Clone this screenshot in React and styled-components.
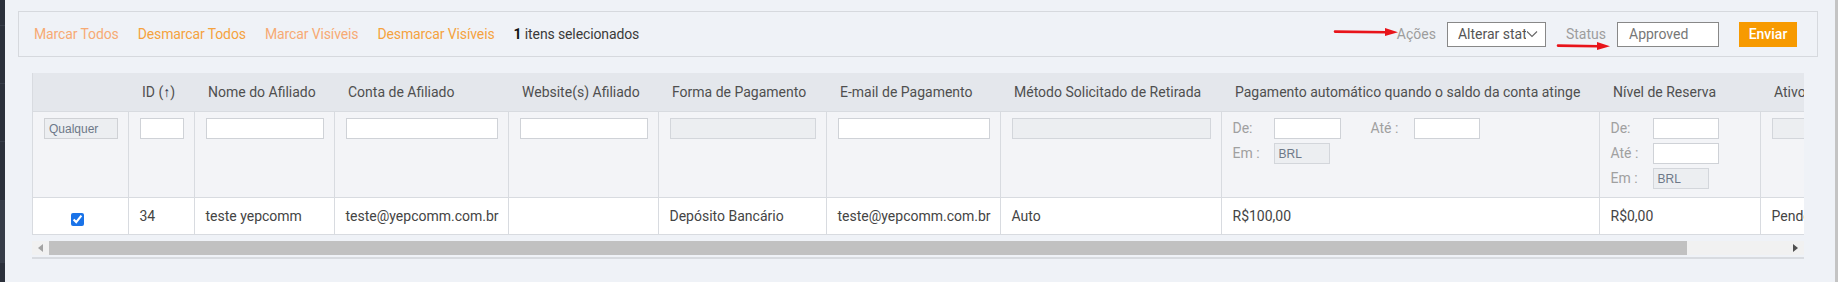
import React from "react";
import styled, { createGlobalStyle } from "styled-components";

const GlobalStyle = createGlobalStyle`
  html, body {
    margin: 0;
    padding: 0;
    background: #eff2f7;
  }
  body {
    font-family: Roboto, "Liberation Sans", Arial, sans-serif;
    font-size: 14px;
    color: #333;
  }
`;

const Page = styled.div`
  display: flex;
  height: 282px;
  overflow: hidden;
`;

const Sidebar = styled.aside`
  flex: none;
  width: 5px;
  display: flex;
  flex-direction: column;
  background: #2b303b;
`;

const SideBlock = styled.div`
  height: ${p => p.h}px;
  flex: none;
  background: ${p => (p.active ? "#363c48" : "#2b303b")};
  border-bottom: 1px solid #373d49;
`;

const WindowEdge = styled.div`
  flex: none;
  width: 3px;
  background: #c4c4c4;
`;

const Main = styled.main`
  flex: 1;
  min-width: 0;
  padding: 11px 17px 0 13px;
  position: relative;
`;

/* ---------- toolbar ---------- */

const Toolbar = styled.div`
  height: 46px;
  box-sizing: border-box;
  border: 1px solid #d6d9de;
  display: flex;
  align-items: center;
  padding: 0 20px 0 15px;
`;

const LinkGroup = styled.div`
  display: flex;
  align-items: center;
  gap: 19px;
  flex: 1;
  letter-spacing: -0.12px;
`;

const ToolLink = styled.a`
  color: ${p => (p.soft ? "#f7aa74" : "#f5a23e")};
  text-decoration: none;
  cursor: pointer;
`;

const Counter = styled.span`
  color: #3a3a3a;
  b {
    color: #111;
    font-weight: 700;
  }
`;

const ActionGroup = styled.div`
  display: flex;
  align-items: center;
`;

const FieldLabel = styled.span`
  color: #9d9d9d;
  margin-right: 11px;
`;

const FakeSelect = styled.div`
  width: 99px;
  height: 25px;
  box-sizing: border-box;
  border: 1px solid #888;
  background: #fff;
  display: flex;
  align-items: center;
  padding-left: 10px;
  color: #555;
  margin-right: 20px;
  overflow: hidden;
  span {
    width: 68px;
    overflow: hidden;
    white-space: nowrap;
  }
  svg {
    flex: none;
  }
`;

const StatusInput = styled.div`
  width: 102px;
  height: 25px;
  box-sizing: border-box;
  border: 1px solid #888;
  background: #fff;
  display: flex;
  align-items: center;
  padding-left: 11px;
  color: #777;
  margin-right: 20px;
`;

const SendButton = styled.button`
  width: 58px;
  height: 25px;
  border: none;
  background: #f79a00;
  color: #fff;
  font-family: inherit;
  font-size: 14px;
  font-weight: 500;
  padding: 0;
  cursor: pointer;
`;

const RedArrow = styled.svg`
  position: absolute;
  left: ${p => p.x}px;
  top: ${p => p.y}px;
  overflow: visible;
`;

/* ---------- table ---------- */

const TableArea = styled.section`
  margin: 16px 14px 0;
`;

const TableClip = styled.div`
  overflow: hidden;
  border-left: 1px solid #d8dbe0;
`;

const Grid = styled.table`
  border-collapse: collapse;
  table-layout: fixed;
  width: ${p => p.w}px;
`;

const HeadCell = styled.th`
  height: 38px;
  padding: 0 0 0 14px;
  background: #e4e7ec;
  color: #4f4f4f;
  font-weight: 400;
  text-align: left;
  white-space: nowrap;
  overflow: hidden;
  border-bottom: 1px solid #d8dbe0;
`;

const SortArrow = styled.span`
  color: #1e2b48;
  font-weight: 700;
`;

const FilterCell = styled.td`
  height: 86px;
  box-sizing: border-box;
  padding: 6px 10px 0 11px;
  vertical-align: top;
  background: #f3f4f7;
  border-right: 1px solid #d8dbe0;
  border-bottom: 1px solid #d8dbe0;
  overflow: hidden;
`;

const FilterInput = styled.div`
  width: ${p => (p.w ? `${p.w}px` : "100%")};
  height: 21px;
  box-sizing: border-box;
  border: 1px solid ${p => (p.disabled ? "#d3d6db" : "#cfd2d7")};
  background: ${p => (p.disabled ? "#eceef1" : "#fff")};
  font-family: "Liberation Sans", Arial, sans-serif;
  font-size: 12px;
  color: #6d7888;
  padding: 3px 0 0 4px;
`;

const AnyBox = styled(FilterInput)`
  background: #eceef1;
  border-color: #cfd1d5;
`;

const RangeGrid = styled.div`
  display: grid;
  grid-template-columns: ${p => p.cols};
  row-gap: 4px;
  align-items: center;
`;

const RangeLabel = styled.span`
  color: #a0a0a0;
  line-height: 21px;
`;

const DataCell = styled.td`
  height: 37px;
  box-sizing: border-box;
  padding: ${p => (p.center ? "4px 5px 0 0" : "0 0 0 11px")};
  background: #fff;
  color: #444;
  white-space: nowrap;
  overflow: hidden;
  border-right: 1px solid #d8dbe0;
  border-bottom: 1px solid #d8dbe0;
  text-align: ${p => (p.center ? "center" : "left")};
  input {
    margin: 0;
    width: 13px;
    height: 13px;
    accent-color: #1a73e8;
    vertical-align: middle;
  }
`;

const ScrollBar = styled.div`
  margin-top: 6px;
  height: 14px;
  display: flex;
  background: #f1f1f1;
`;

const ScrollButton = styled.div`
  flex: none;
  width: 17px;
  display: flex;
  align-items: center;
  justify-content: center;
`;

const ScrollThumb = styled.div`
  flex: none;
  width: ${p => p.w}px;
  background: #c1c1c1;
`;

const ScrollRest = styled.div`
  flex: 1;
`;

const BottomRule = styled.div`
  height: 2px;
  margin-top: 2px;
  background: #d8dbe0;
`;

const columns = [
  { w: 95, title: "" },
  { w: 66, title: "ID" },
  { w: 140, title: "Nome do Afiliado" },
  { w: 174, title: "Conta de Afiliado" },
  { w: 150, title: "Website(s) Afiliado" },
  { w: 168, title: "Forma de Pagamento" },
  { w: 174, title: "E-mail de Pagamento" },
  { w: 221, title: "Método Solicitado de Retirada" },
  { w: 378, title: "Pagamento automático quando o saldo da conta atinge" },
  { w: 161, title: "Nível de Reserva" },
  { w: 140, title: "Ativo" },
];

const row = [
  "34",
  "teste yepcomm",
  "teste@yepcomm.com.br",
  "",
  "Depósito Bancário",
  "teste@yepcomm.com.br",
  "Auto",
  "R$100,00",
  "R$0,00",
  "Pendente",
];

const Arrow = ({ x, y, w }) => (
  <RedArrow x={x} y={y} width={w} height={10} viewBox={`0 0 ${w} 10`}>
    <path d={`M0 4.6 L${w - 12} 5.2`} stroke="#e8141a" strokeWidth="2.6" strokeLinecap="round" fill="none" />
    <path d={`M${w - 13} 1 L${w} 5.3 L${w - 13} 9 Z`} fill="#e8141a" />
  </RedArrow>
);

export default function App() {
  const tableWidth = columns.reduce((s, c) => s + c.w, 0);
  return (
    <>
      <GlobalStyle />
      <Page>
        <Sidebar>
          <SideBlock h={25} />
          <SideBlock h={57} />
          <SideBlock h={57} />
          <SideBlock h={58} />
          <SideBlock h={61} active />
        </Sidebar>
        <Main>
          <Toolbar>
            <LinkGroup>
              <ToolLink soft>Marcar Todos</ToolLink>
              <ToolLink>Desmarcar Todos</ToolLink>
              <ToolLink soft>Marcar Visíveis</ToolLink>
              <ToolLink>Desmarcar Visíveis</ToolLink>
              <Counter>
                <b>1</b> itens selecionados
              </Counter>
            </LinkGroup>
            <ActionGroup>
              <FieldLabel>Ações</FieldLabel>
              <FakeSelect>
                <span>Alterar status</span>
                <svg width="12" height="8" viewBox="0 0 12 8">
                  <path d="M1 1.5 L6 6.5 L11 1.5" stroke="#666" strokeWidth="1.1" fill="none" />
                </svg>
              </FakeSelect>
              <FieldLabel>Status</FieldLabel>
              <StatusInput>Approved</StatusInput>
              <SendButton>Enviar</SendButton>
            </ActionGroup>
          </Toolbar>

          <Arrow x={1330} y={27} w={63} />
          <Arrow x={1553} y={41} w={52} />

          <TableArea>
            <TableClip>
              <Grid w={tableWidth}>
                <colgroup>
                  {columns.map((c, i) => (
                    <col key={i} style={{ width: c.w }} />
                  ))}
                </colgroup>
                <thead>
                  <tr>
                    {columns.map((c, i) => (
                      <HeadCell key={i}>
                        {c.title === "ID" ? (
                          <>
                            ID (<SortArrow>↑</SortArrow>)
                          </>
                        ) : (
                          c.title
                        )}
                      </HeadCell>
                    ))}
                  </tr>
                </thead>
                <tbody>
                  <tr>
                    <FilterCell>
                      <AnyBox>Qualquer</AnyBox>
                    </FilterCell>
                    <FilterCell><FilterInput /></FilterCell>
                    <FilterCell><FilterInput /></FilterCell>
                    <FilterCell><FilterInput /></FilterCell>
                    <FilterCell><FilterInput /></FilterCell>
                    <FilterCell><FilterInput disabled /></FilterCell>
                    <FilterCell><FilterInput /></FilterCell>
                    <FilterCell><FilterInput disabled /></FilterCell>
                    <FilterCell>
                      <RangeGrid cols="41px 67px 30px 43px 66px">
                        <RangeLabel>De:</RangeLabel>
                        <FilterInput />
                        <span />
                        <RangeLabel>Até :</RangeLabel>
                        <FilterInput />
                        <RangeLabel>Em :</RangeLabel>
                        <FilterInput disabled w={56}>BRL</FilterInput>
                      </RangeGrid>
                    </FilterCell>
                    <FilterCell>
                      <RangeGrid cols="42px 66px">
                        <RangeLabel>De:</RangeLabel>
                        <FilterInput />
                        <RangeLabel>Até :</RangeLabel>
                        <FilterInput />
                        <RangeLabel>Em :</RangeLabel>
                        <FilterInput disabled w={56}>BRL</FilterInput>
                      </RangeGrid>
                    </FilterCell>
                    <FilterCell><FilterInput disabled /></FilterCell>
                  </tr>
                  <tr>
                    <DataCell center>
                      <input type="checkbox" checked readOnly />
                    </DataCell>
                    {row.map((v, i) => (
                      <DataCell key={i}>{v}</DataCell>
                    ))}
                  </tr>
                </tbody>
              </Grid>
            </TableClip>
            <ScrollBar>
              <ScrollButton>
                <svg width="5" height="8" viewBox="0 0 5 8">
                  <path d="M5 0 L0 4 L5 8 Z" fill="#a3a3a3" />
                </svg>
              </ScrollButton>
              <ScrollThumb w={1638} />
              <ScrollRest />
              <ScrollButton>
                <svg width="5" height="8" viewBox="0 0 5 8">
                  <path d="M0 0 L5 4 L0 8 Z" fill="#505050" />
                </svg>
              </ScrollButton>
            </ScrollBar>
            <BottomRule />
          </TableArea>
        </Main>
        <WindowEdge />
      </Page>
    </>
  );
}
